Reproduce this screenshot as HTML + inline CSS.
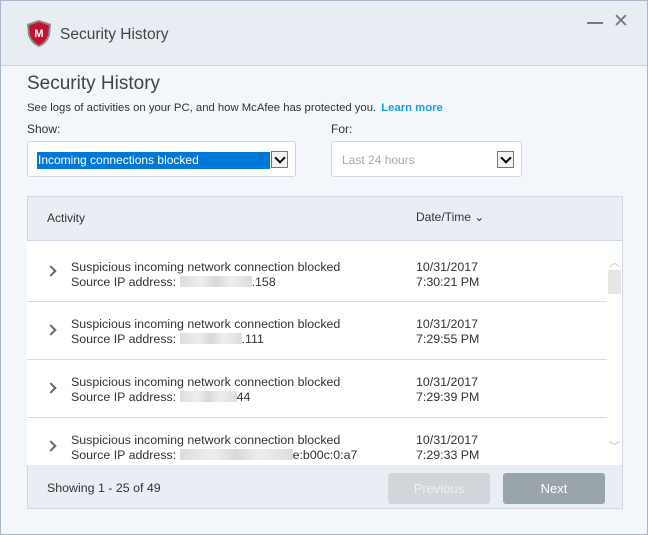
<!DOCTYPE html>
<html><head><style>
*{margin:0;padding:0;box-sizing:border-box}
body{width:648px;height:535px;overflow:hidden;font-family:"Liberation Sans",sans-serif;background:#fff;position:relative}
.win{position:absolute;left:0;top:0;width:648px;height:535px;border:1px solid #a8b6c9;background:#f3f6fa}
.in{position:absolute;left:-1px;top:-1px;width:648px;height:535px}
.title{position:absolute;left:1px;top:1px;width:646px;height:65px;background:#e8edf3;border-bottom:1px solid #c9d3df}
.a{position:absolute;white-space:nowrap}
.t{color:#333;font-size:12.4px;line-height:15px}
.row{position:absolute;left:27px;width:580px;background:#fff;border-bottom:1px solid #d6dde6}
.chev{position:absolute;left:20px;width:8px;height:8px;border-right:2px solid #666;border-top:2px solid #666;transform:rotate(45deg)}
.blur{display:inline-block;height:11px;background:linear-gradient(90deg,#ddd,#eee 30%,#d8d8d8 50%,#eee 70%,#ddd);vertical-align:-1px}
.btn{position:absolute;top:473px;width:102px;height:31px;border-radius:3px;font-size:13px;text-align:center;line-height:31px}
.dd{position:absolute;top:141px;height:36px;background:#fff;border:1px solid #cfd7e0;border-radius:3px}
.ab{position:absolute;width:17px;height:17px;border:1px solid #777;background:#f2f2f2}
.ab:after{content:"";position:absolute;left:4px;top:2px;width:6px;height:6px;border-right:2px solid #000;border-bottom:2px solid #000;transform:rotate(45deg)}
</style></head><body>
<div class="win"><div class="in">
<div class="title"></div>
<svg class="a" style="left:26px;top:19px" width="26" height="29" viewBox="0 0 26 29"><path d="M13 1 L25 5 L24 16 Q21 25 13 28 Q5 25 2 16 L1 5 Z" fill="#8a8a8a"/><path d="M13 3 L23 6.5 L22 16 Q19.5 23 13 26 Q6.5 23 4 16 L3 6.5 Z" fill="#c8102e"/><text x="13" y="18" font-size="11" font-weight="bold" fill="#fff" text-anchor="middle" font-family="Liberation Sans">M</text></svg>
<div class="a" style="left:60px;top:26px;font-size:15.5px;color:#444">Security History</div>
<div class="a" style="left:587px;top:22px;width:16px;height:2px;background:#777"></div>
<div class="a" style="left:613px;top:11px;font-size:19px;color:#777;line-height:22px">✕</div>
<div class="a" style="left:27px;top:73px;font-size:19px;color:#444">Security History</div>
<div class="a" style="left:27px;top:102px;font-size:11.3px;color:#333">See logs of activities on your PC, and how McAfee has protected you. <b style="color:#1a9de0;margin-left:2px">Learn more</b></div>
<div class="a t" style="left:27px;top:122px;font-size:12px">Show:</div>
<div class="a t" style="left:331px;top:122px;font-size:12px">For:</div>
<div class="dd" style="left:27px;width:269px"><div class="a" style="left:9px;top:10px;width:233px;height:17px;background:#0078d7;color:#fff;font-size:12px;line-height:17px;padding-left:1px">Incoming connections blocked</div><div class="ab" style="left:243px;top:9px"></div></div>
<div class="dd" style="left:331px;width:191px"><div class="a" style="left:10px;top:11px;color:#aaa;font-size:12px">Last 24 hours</div><div class="ab" style="left:165px;top:9px"></div></div>
<div class="a" style="left:27px;top:196px;width:596px;height:313px;border:1px solid #cfd8e3;background:#e9eef4"></div>
<div class="a" style="left:28px;top:240px;width:594px;height:225px;background:#fff;border-top:1px solid #cfd8e3"></div>
<div class="a t" style="left:47px;top:211px;font-size:12px">Activity</div>
<div class="a t" style="left:416px;top:210px;font-size:12px">Date/Time ⌄</div>
<div class="row" style="top:241px;height:61px"><div class="chev" style="top:26px"></div><div class="a t" style="left:44px;top:19px">Suspicious incoming network connection blocked<br>Source IP address: <span class="blur" style="width:72px"></span>.158</div><div class="a t" style="left:389px;top:19px">10/31/2017<br>7:30:21 PM</div></div>
<div class="row" style="top:302px;height:58px"><div class="chev" style="top:24px"></div><div class="a t" style="left:44px;top:15px">Suspicious incoming network connection blocked<br>Source IP address: <span class="blur" style="width:62px"></span>.111</div><div class="a t" style="left:389px;top:15px">10/31/2017<br>7:29:55 PM</div></div>
<div class="row" style="top:360px;height:58px"><div class="chev" style="top:24px"></div><div class="a t" style="left:44px;top:15px">Suspicious incoming network connection blocked<br>Source IP address: <span class="blur" style="width:57px"></span>44</div><div class="a t" style="left:389px;top:15px">10/31/2017<br>7:29:39 PM</div></div>
<div class="row" style="top:418px;height:47px;border:none;overflow:hidden"><div class="chev" style="top:24px"></div><div class="a t" style="left:44px;top:15px">Suspicious incoming network connection blocked<br>Source IP address: <span class="blur" style="width:113px"></span>e:b00c:0:a7</div><div class="a t" style="left:389px;top:15px">10/31/2017<br>7:29:33 PM</div></div>
<div class="a" style="left:609px;top:254px;font-size:11px;color:#bbb">︿</div>
<div class="a" style="left:608px;top:270px;width:13px;height:24px;background:#e6e6e6"></div>
<div class="a" style="left:609px;top:438px;font-size:11px;color:#bbb">﹀</div>
<div class="a t" style="left:47px;top:481px">Showing 1 - 25 of 49</div>
<div class="btn" style="left:388px;background:#d1d6db;color:#eef0f2">Previous</div>
<div class="btn" style="left:503px;background:#9aa4ab;color:#fff">Next</div>
</div></div>
</body></html>
